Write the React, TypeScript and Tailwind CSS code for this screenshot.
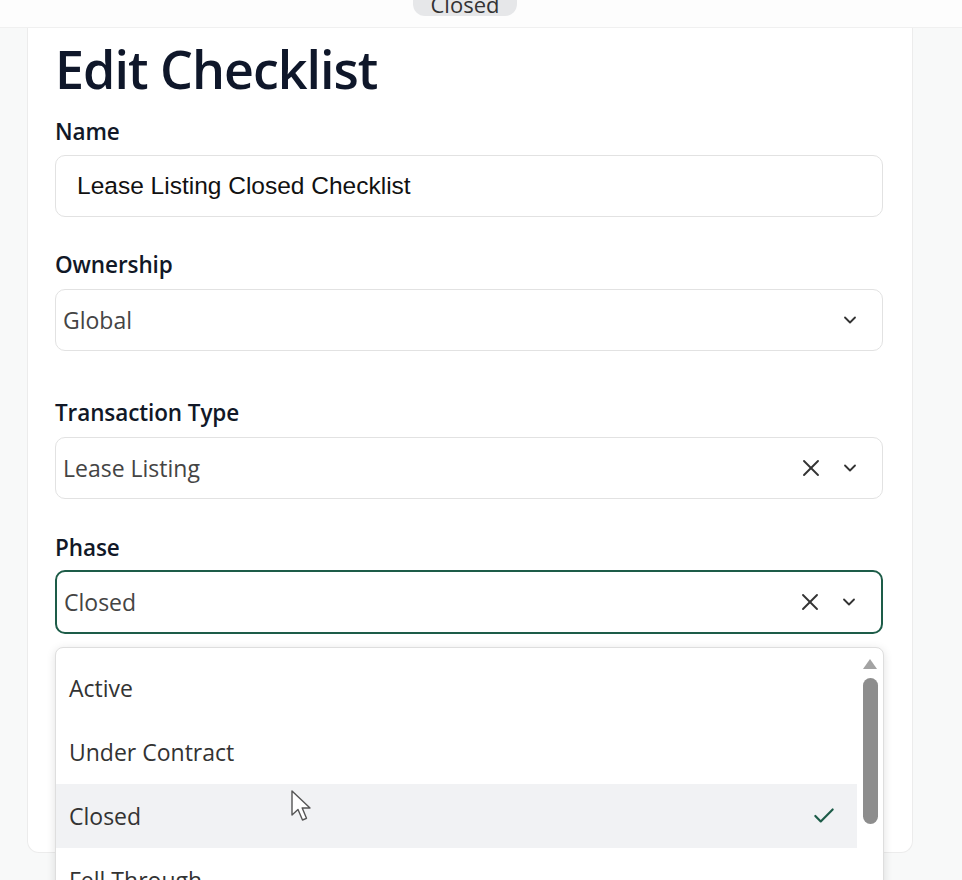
import { Check, ChevronDown, X } from "lucide-react";

const ui = "font-['Open_Sans','Noto_Sans',sans-serif]";

function Label({ children }: { children: React.ReactNode }) {
    return (
        <div className={`${ui} text-[22.5px] leading-[28px] font-semibold tracking-[-0.1px] text-[#111827]`}>
            {children}
        </div>
    );
}

function SelectBox({ value, clearable, focused }: { value: string; clearable?: boolean; focused?: boolean }) {
    return (
        <div
            className={`flex items-center rounded-[10px] bg-white pl-[7px] pr-[22px] ${
                focused ? "h-[64px] border-2 border-[#1d5c48]" : "h-[62px] border border-[#e2e2e2]"
            }`}
        >
            <span className={`${ui} flex-1 text-[23px] text-[#444]`}>{value}</span>
            {clearable && <X className="mr-[15px] h-[28px] w-[28px] text-[#333]" strokeWidth={1.6} />}
            <ChevronDown className="h-[20px] w-[20px] text-[#333]" strokeWidth={2.2} />
        </div>
    );
}

const phases = ["Active", "Under Contract", "Closed", "Fell Through"];

function PhaseMenu() {
    return (
        <div className="absolute left-0 right-[-1px] top-[77px] z-10 flex h-[260px] overflow-hidden rounded-t-[8px] border border-[#dedede] bg-white pt-[8px] shadow-[0_2px_10px_rgba(0,0,0,0.12)]">
            <div className="flex-1">
                {phases.map((p) => (
                    <div
                        key={p}
                        className={`flex h-[64px] items-center justify-between pl-[13px] pr-[20px] ${
                            p === "Closed" ? "bg-[#f1f2f4]" : ""
                        }`}
                    >
                        <span className={`${ui} text-[23px] text-[#333]`}>{p}</span>
                        {p === "Closed" && <Check className="h-[26px] w-[26px] text-[#1d5c48]" strokeWidth={2} />}
                    </div>
                ))}
            </div>
            {/* scrollbar */}
            <div className="flex w-[26px] flex-col items-center">
                <svg width="16" height="12" viewBox="0 0 16 12" className="mt-[2px]">
                    <path d="M8 1 L15 11 L1 11 Z" fill="#a3a3a3" />
                </svg>
                <div className="mt-[8px] h-[146px] w-[15px] rounded-full bg-[#8d8d8d]" />
                <div className="flex-1" />
                <svg width="16" height="12" viewBox="0 0 16 12" className="mb-[12px]">
                    <path d="M1 1 L15 1 L8 11 Z" fill="#a3a3a3" />
                </svg>
            </div>
        </div>
    );
}

function Cursor() {
    return (
        <svg width="26" height="34" viewBox="0 0 26 34" className="absolute left-[290px] top-[789px] z-20">
            <path
                d="M2 2 L2 26 L8 20.5 L12.5 31 L16.5 29.3 L12.2 19 L20 19 Z"
                fill="#fff"
                stroke="#555"
                strokeWidth="1.4"
                strokeLinejoin="round"
            />
        </svg>
    );
}

export default function App() {
    return (
        <div className="relative h-[880px] w-[962px] overflow-hidden bg-[#f8f9f9]">
            {/* top bar with the phase pill */}
            <div className="flex h-[28px] border-b border-[#f0f0f0] bg-[#fdfdfd] pl-[413px]">
                <div className={`${ui} -mt-[14px] flex h-[30px] w-[104px] items-end justify-center rounded-[12px] bg-[#e6e7e9] text-[22px] leading-[24px] text-[#333]`}>
                    Closed
                </div>
            </div>

            {/* card */}
            <div className="ml-[27px] h-[825px] w-[886px] rounded-b-[12px] border-x border-b border-[#ececec] bg-white pl-[27px] pr-[29px] pt-[9px]">
                <h1 className={`${ui} text-[52px] leading-[64px] font-semibold tracking-[-1px] text-[#0f172a]`}>
                    Edit Checklist
                </h1>

                <div className="mt-[17px]">
                    <Label>Name</Label>
                    <div className="mt-[9px] flex h-[62px] items-center rounded-[10px] border border-[#e2e2e2] bg-white px-[21px]">
                        <span className="font-['Liberation_Sans',Arial,sans-serif] text-[24.5px] text-[#111]">
                            Lease Listing Closed Checklist
                        </span>
                    </div>
                </div>

                <div className="mt-[34px]">
                    <Label>Ownership</Label>
                    <div className="mt-[10px]">
                        <SelectBox value="Global" />
                    </div>
                </div>

                <div className="mt-[48px]">
                    <Label>Transaction Type</Label>
                    <div className="mt-[10px]">
                        <SelectBox value="Lease Listing" clearable />
                    </div>
                </div>

                <div className="mt-[35px]">
                    <Label>Phase</Label>
                    <div className="relative mt-[8px]">
                        <SelectBox value="Closed" clearable focused />
                        <PhaseMenu />
                    </div>
                </div>
            </div>

            <Cursor />
        </div>
    );
}
